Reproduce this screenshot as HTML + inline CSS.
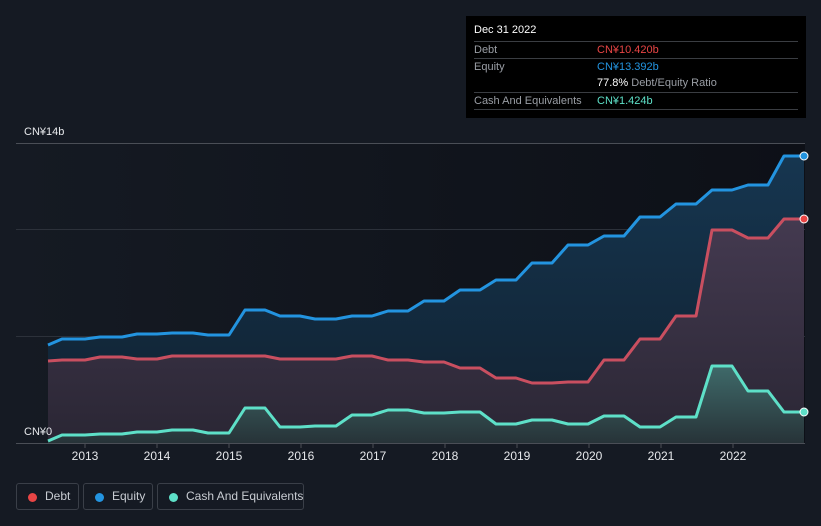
<!DOCTYPE html>
<html><head><meta charset="utf-8"><style>
html,body{margin:0;width:821px;height:526px;overflow:hidden}
body{background:#151a23;font-family:"Liberation Sans","Noto Sans CJK SC",sans-serif;position:relative}
.tt{position:absolute;left:466px;top:16px;width:340px;height:102px;background:#000;color:#fff;font-size:11px}
.tt .r{position:absolute;left:8px;right:8px;border-top:1px solid #3a3d42;height:16px}
.tt span{position:absolute;top:2px;white-space:nowrap}
.leg{position:absolute;top:483px;height:27px;border:1px solid #3a3f48;border-radius:3px;color:#c8ccd2;font-size:12px;line-height:25px;box-sizing:border-box;white-space:nowrap}
.leg i{position:absolute;left:11px;top:9px;width:9px;height:9px;border-radius:50%}
</style></head><body>
<svg width="821" height="526" style="position:absolute;left:0;top:0">
<defs>
<linearGradient id="bg" x1="0" x2="1"><stop offset="0" stop-color="#151a23"/><stop offset="1" stop-color="#0d1017"/></linearGradient>
<linearGradient id="eq" x1="0" y1="0" x2="0" y2="1"><stop offset="0" stop-color="#163650"/><stop offset="1" stop-color="#10202f"/></linearGradient>
<linearGradient id="db" x1="0" y1="0" x2="0" y2="1"><stop offset="0" stop-color="#443a50"/><stop offset="1" stop-color="#2a2634"/></linearGradient>
<linearGradient id="cs" x1="0" y1="0" x2="0" y2="1"><stop offset="0" stop-color="#3f6a6a"/><stop offset="1" stop-color="#273338"/></linearGradient>
</defs>
<rect x="16" y="143" width="789" height="300" fill="url(#bg)"/>
<g stroke="#2c313a" stroke-width="1"><line x1="16" y1="229.5" x2="805" y2="229.5"/><line x1="16" y1="336.5" x2="805" y2="336.5"/></g>
<line x1="16" y1="143.5" x2="805" y2="143.5" stroke="#4a4e56"/>
<polygon fill="url(#eq)" points="48,443 48,345 62,339 85,339 100,337 122,337 137,334 157,334 172,333 193,333 208,335 229,335 245,310 265,310 280,316 300,316 315,319 336,319 352,316 372,316 388,311 408,311 424,301 444,301 460,290 480,290 496,280 516,280 532,263 552,263 568,245 588,245 604,236 624,236 640,217 660,217 676,204 696,204 712,190 732,190 748,185 768,185 784,156 804,156 804,443"/>
<polygon fill="url(#db)" points="48,443 48,361 62,360 85,360 100,357 122,357 137,359 157,359 172,356 193,356 265,356 280,359 336,359 352,356 372,356 388,360 408,360 424,362 444,362 460,368 480,368 496,378 516,378 532,383 552,383 568,382 588,382 604,360 624,360 640,339 660,339 676,316 696,316 712,230 732,230 748,238 768,238 784,219 804,219 804,443"/>
<polygon fill="url(#cs)" points="48,443 48,441 62,435 85,435 100,434 122,434 137,432 157,432 172,430 193,430 208,433 229,433 245,408 265,408 280,427 300,427 315,426 336,426 352,415 372,415 388,410 408,410 424,413 444,413 460,412 480,412 496,424 516,424 532,420 552,420 568,424 588,424 604,416 624,416 640,427 660,427 676,417 696,417 712,366 732,366 748,391 768,391 784,412 804,412 804,443"/>
<g fill="none" stroke-width="3" stroke-linejoin="round">
<polyline stroke="#2394e0" points="48,345 62,339 85,339 100,337 122,337 137,334 157,334 172,333 193,333 208,335 229,335 245,310 265,310 280,316 300,316 315,319 336,319 352,316 372,316 388,311 408,311 424,301 444,301 460,290 480,290 496,280 516,280 532,263 552,263 568,245 588,245 604,236 624,236 640,217 660,217 676,204 696,204 712,190 732,190 748,185 768,185 784,156 804,156"/>
<polyline stroke="#c94f60" points="48,361 62,360 85,360 100,357 122,357 137,359 157,359 172,356 193,356 265,356 280,359 336,359 352,356 372,356 388,360 408,360 424,362 444,362 460,368 480,368 496,378 516,378 532,383 552,383 568,382 588,382 604,360 624,360 640,339 660,339 676,316 696,316 712,230 732,230 748,238 768,238 784,219 804,219"/>
<polyline stroke="#5ee0c8" points="48,441 62,435 85,435 100,434 122,434 137,432 157,432 172,430 193,430 208,433 229,433 245,408 265,408 280,427 300,427 315,426 336,426 352,415 372,415 388,410 408,410 424,413 444,413 460,412 480,412 496,424 516,424 532,420 552,420 568,424 588,424 604,416 624,416 640,427 660,427 676,417 696,417 712,366 732,366 748,391 768,391 784,412 804,412"/>
</g>
<circle cx="804" cy="156" r="4" fill="#2394e0" stroke="#fff" stroke-width="1"/>
<circle cx="804" cy="219" r="4" fill="#e84545" stroke="#fff" stroke-width="1"/>
<circle cx="804" cy="412" r="4" fill="#5ee0c8" stroke="#fff" stroke-width="1"/>
<line x1="16" y1="443.5" x2="805" y2="443.5" stroke="#4a4e56"/>
<g stroke="#4a4e56"><line x1="85" y1="443" x2="85" y2="448"/><line x1="157" y1="443" x2="157" y2="448"/><line x1="229" y1="443" x2="229" y2="448"/><line x1="301" y1="443" x2="301" y2="448"/><line x1="373" y1="443" x2="373" y2="448"/><line x1="445" y1="443" x2="445" y2="448"/><line x1="517" y1="443" x2="517" y2="448"/><line x1="589" y1="443" x2="589" y2="448"/><line x1="661" y1="443" x2="661" y2="448"/><line x1="733" y1="443" x2="733" y2="448"/></g>
<g fill="#e6e8eb" font-size="12" text-anchor="middle" font-family="Liberation Sans,sans-serif">
<text x="85" y="460">2013</text><text x="157" y="460">2014</text><text x="229" y="460">2015</text><text x="301" y="460">2016</text><text x="373" y="460">2017</text><text x="445" y="460">2018</text><text x="517" y="460">2019</text><text x="589" y="460">2020</text><text x="661" y="460">2021</text><text x="733" y="460">2022</text>
</g>
<g fill="#e6e8eb" font-size="11" font-family="Liberation Sans,'Noto Sans CJK SC',sans-serif"><text x="24" y="135">CN¥14b</text><text x="24" y="435">CN¥0</text></g>
</svg>
<div class="tt">
<div style="position:absolute;left:8px;top:8px;font-size:11px">Dec 31 2022</div>
<div class="r" style="top:25px"><span style="color:#9a9ea5">Debt</span><span style="left:123px;color:#e84545">CN¥10.420b</span></div>
<div class="r" style="top:42px"><span style="color:#9a9ea5">Equity</span><span style="left:123px;color:#2394e0">CN¥13.392b</span></div>
<div class="r" style="top:59px;border-top:none"><span style="left:123px;color:#fff">77.8% <span style="position:static;color:#9a9ea5">Debt/Equity Ratio</span></span></div>
<div class="r" style="top:76px"><span style="color:#9a9ea5">Cash And Equivalents</span><span style="left:123px;color:#5ee0c8">CN¥1.424b</span></div>
<div class="r" style="top:93px;height:0"></div>
</div>
<div class="leg" style="left:16px;width:63px"><i style="background:#e84545"></i><span style="position:absolute;left:28px">Debt</span></div>
<div class="leg" style="left:83px;width:70px"><i style="background:#2394e0"></i><span style="position:absolute;left:28px">Equity</span></div>
<div class="leg" style="left:157px;width:147px"><i style="background:#5ee0c8"></i><span style="position:absolute;left:28px">Cash And Equivalents</span></div>
</body></html>
